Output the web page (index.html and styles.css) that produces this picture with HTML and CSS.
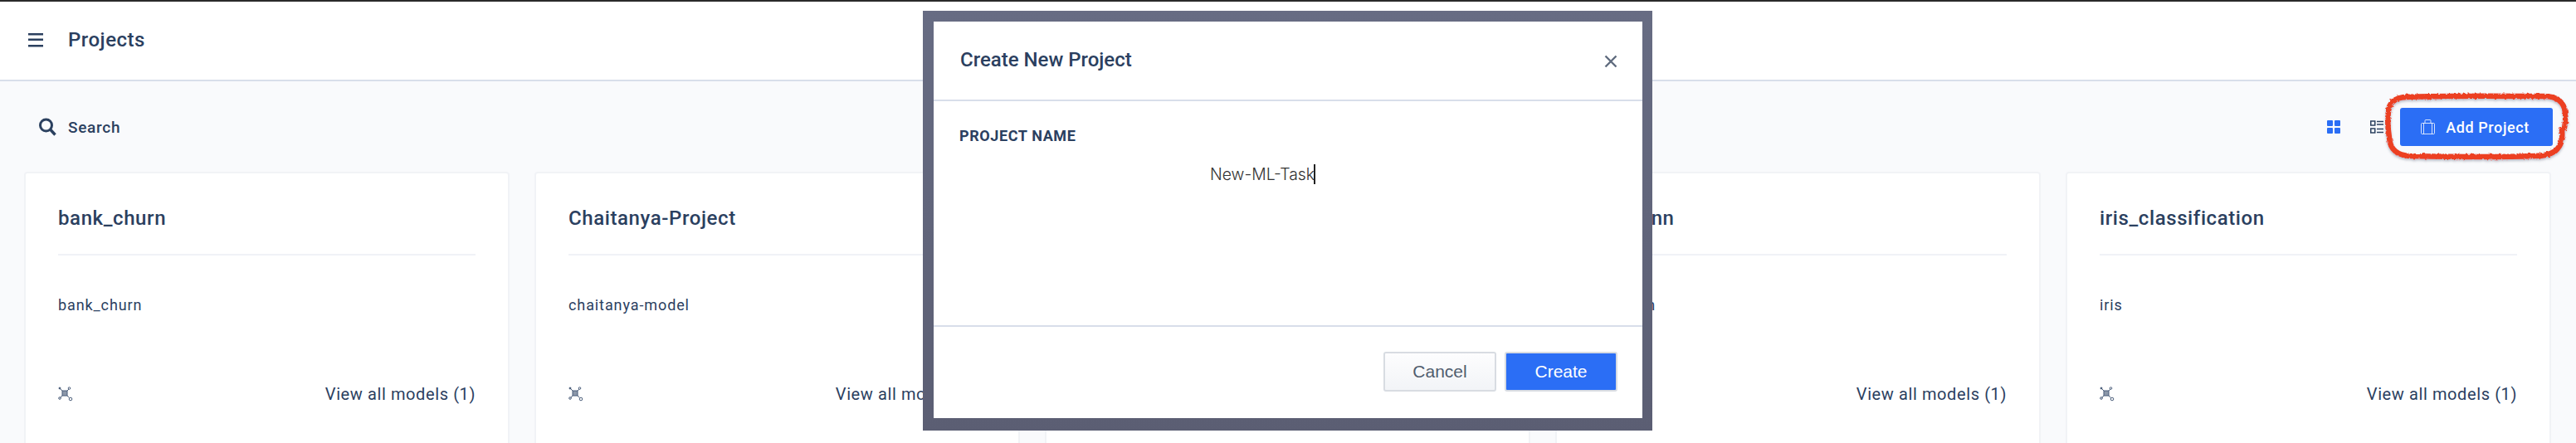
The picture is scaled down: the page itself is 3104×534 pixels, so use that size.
FILE: index.html
```html
<!DOCTYPE html>
<html>

<head>
    <meta charset="utf-8">
    <title>Projects</title>
    <link rel="stylesheet" href="styles.css">
</head>

<body>
    <div class="page-header">
        <svg class="menu-icon" width="18" height="18" viewBox="0 0 18 18">
            <path d="M0 1h18v2.400H0zM0 7.500h18v2.400H0zM0 15h18v2.400H0z" fill="#2b405f"/>
        </svg>
        <span class="page-title">Projects</span>
    </div>

    <div class="content">
        <div class="toolbar">
            <div class="search">
                <svg width="22" height="22" viewBox="0 0 22 22" fill="none" stroke="#2b405f">
                    <circle cx="9.500" cy="9" r="7" stroke-width="3"/>
                    <path d="M14.500 14l6 6.500" stroke-width="3.400"/>
                </svg>
                <span>Search</span>
            </div>
            <div class="actions">
                <svg class="view-grid" width="16" height="16" viewBox="0 0 16 16" fill="#2b6ef5">
                    <rect width="7" height="7" rx="1"/>
                    <rect x="9" width="7" height="7" rx="1"/>
                    <rect y="9" width="7" height="7" rx="1"/>
                    <rect x="9" y="9" width="7" height="7" rx="1"/>
                </svg>
                <svg class="view-list" width="16" height="16" viewBox="0 0 16 16" fill="none" stroke="#2b405f" stroke-width="1.500">
                    <rect x=".75" y="1" width="5" height="5"/>
                    <rect x=".75" y="10" width="5" height="5"/>
                    <path d="M8 1.500h8M8 5h8M8 10.500h8M8 14.500h8"/>
                </svg>
                <button class="add-btn">
                    <svg width="17" height="18" viewBox="0 0 17 18" fill="none" stroke="#fff" stroke-opacity=".8" stroke-width="1">
                        <rect x=".5" y="4.500" width="16" height="13" rx="1"/>
                        <path d="M5 4.500V1.500a1 1 0 0 1 1-1h5a1 1 0 0 1 1 1v3M3.500 4.500v13M13.500 4.500v13"/>
                    </svg>
                    Add Project
                </button>
            </div>
        </div>

        <div class="card-list">
            <div class="card">
                <div class="card-title">bank_churn</div>
                <div class="card-desc">bank_churn</div>
                <div class="card-foot">
                    <svg class="model-icon" width="18" height="18" viewBox="0 0 18 18" fill="none" stroke="#4a5d7a" stroke-width="1">
                        <rect x="5" y="5" width="6" height="6" fill="#8b97a9"/>
                        <path d="M5 5L2.500 2.500M11 5l2-2M5 11l-2 2M11 11l2.500 2.500"/>
                        <circle cx="2" cy="2" r="1" fill="#2b405f"/>
                        <circle cx="13.500" cy="2" r="1.300"/>
                        <circle cx="2" cy="14" r="1.300"/>
                        <circle cx="15" cy="15" r="1.800"/>
                    </svg>
                    <span>View all models (1)</span>
                </div>
            </div>
            <div class="card">
                <div class="card-title">Chaitanya-Project</div>
                <div class="card-desc">chaitanya-model</div>
                <div class="card-foot">
                    <svg class="model-icon" width="18" height="18" viewBox="0 0 18 18" fill="none" stroke="#4a5d7a" stroke-width="1">
                        <rect x="5" y="5" width="6" height="6" fill="#8b97a9"/>
                        <path d="M5 5L2.500 2.500M11 5l2-2M5 11l-2 2M11 11l2.500 2.500"/>
                        <circle cx="2" cy="2" r="1" fill="#2b405f"/>
                        <circle cx="13.500" cy="2" r="1.300"/>
                        <circle cx="2" cy="14" r="1.300"/>
                        <circle cx="15" cy="15" r="1.800"/>
                    </svg>
                    <span>View all models (1)</span>
                </div>
            </div>
            <div class="card">
                <div class="card-title">credit_risk</div>
                <div class="card-desc">credit</div>
                <div class="card-foot">
                    <svg class="model-icon" width="18" height="18" viewBox="0 0 18 18"></svg>
                    <span>View all models (1)</span>
                </div>
            </div>
            <div class="card">
                <div class="card-title">demo_nn</div>
                <div class="card-desc">demo_nn</div>
                <div class="card-foot">
                    <svg class="model-icon" width="18" height="18" viewBox="0 0 18 18"></svg>
                    <span>View all models (1)</span>
                </div>
            </div>
            <div class="card">
                <div class="card-title">iris_classification</div>
                <div class="card-desc">iris</div>
                <div class="card-foot">
                    <svg class="model-icon" width="18" height="18" viewBox="0 0 18 18" fill="none" stroke="#4a5d7a" stroke-width="1">
                        <rect x="5" y="5" width="6" height="6" fill="#8b97a9"/>
                        <path d="M5 5L2.500 2.500M11 5l2-2M5 11l-2 2M11 11l2.500 2.500"/>
                        <circle cx="2" cy="2" r="1" fill="#2b405f"/>
                        <circle cx="13.500" cy="2" r="1.300"/>
                        <circle cx="2" cy="14" r="1.300"/>
                        <circle cx="15" cy="15" r="1.800"/>
                    </svg>
                    <span>View all models (1)</span>
                </div>
            </div>
        </div>
    </div>

    <!-- red marker drawn over the button -->
    <svg class="marker" width="236" height="96" viewBox="0 0 236 96" fill="none">
        <defs>
            <filter id="rough" x="-5%" y="-10%" width="110%" height="125%">
                <feTurbulence type="fractalNoise" baseFrequency=".35" numOctaves="2" seed="4"/>
                <feDisplacementMap in="SourceGraphic" scale="3.500"/>
                <feDropShadow dx="0" dy="2" stdDeviation="1.500" flood-color="#6b7285" flood-opacity=".45"/>
            </filter>
        </defs>
        <g filter="url(#rough)" stroke="#ec4024" stroke-width="6.500" stroke-linecap="round">
            <path d="M30 13C80 11 170 12 198 12c16 0 24 8 25 20 1 8 0 12 -1 18"/>
            <path d="M219 53c1 10 0 18 -8 25-6 4 -14 6 -24 6C140 86 80 85 36 84 20 83 12 76 11 62 9 50 9 38 10 30 11 19 18 14 30 13"/>
        </g>
    </svg>

    <div class="modal-frame">
        <div class="modal">
            <div class="modal-head">
                <span class="modal-title">Create New Project</span>
                <svg class="modal-close" width="16" height="16" viewBox="0 0 16 16" stroke="#5f6b7e" stroke-width="2.400">
                    <path d="M1.500 1.500l13 13M14.500 1.500l-13 13"/>
                </svg>
            </div>
            <div class="modal-body">
                <div class="field-label">PROJECT NAME</div>
                <div class="field-value"><span>New-ML-Task</span><i class="caret"></i></div>
            </div>
            <div class="modal-foot">
                <button class="btn btn-cancel">Cancel</button>
                <button class="btn btn-create">Create</button>
            </div>
        </div>
    </div>
</body>

</html>
```

FILE: styles.css
```css
* {
    box-sizing: border-box;
}

html,
body {
    margin: 0;
    height: 534px;
    overflow: hidden;
}

body {
    position: relative;
    background: #f9fafc;
    border-top: 2px solid #2a2a2a;
    font-family: Roboto, "Liberation Sans", sans-serif;
    color: #2b405f;
}

.page-header {
    height: 96px;
    padding: 0 0 2px 34px;
    display: flex;
    align-items: center;
    background: #fff;
    border-bottom: 2px solid #d8deea;
}

.menu-icon {
    margin-right: 30px;
}

.page-title {
    font-size: 24px;
    font-weight: 500;
    letter-spacing: .5px;
}

.toolbar {
    height: 109px;
    padding: 32px 28px 0 46px;
    display: flex;
    justify-content: space-between;
    align-items: flex-start;
}

.search {
    display: flex;
    align-items: center;
    height: 46px;
    font-size: 19px;
    font-weight: 500;
    letter-spacing: .7px;
}

.search svg {
    margin-right: 14px;
}

.actions {
    display: flex;
    align-items: center;
}

.view-grid {
    margin-right: 36px;
}

.view-list {
    margin-right: 20px;
}

.add-btn {
    width: 184px;
    height: 46px;
    padding: 0 3px 0 0;
    display: flex;
    align-items: center;
    justify-content: center;
    gap: 13px;
    border: 0;
    border-radius: 3px;
    background: #2b6ef5;
    color: #fff;
    font-family: inherit;
    font-size: 18px;
    font-weight: 500;
    letter-spacing: .6px;
}

.card-list {
    padding: 0 30px 0 29px;
    display: grid;
    grid-template-columns: repeat(5, 585px);
    column-gap: 30px;
}

.card {
    height: 340px;
    padding: 0 39px;
    background: #fff;
    border: 2px solid #f1f3f6;
    border-radius: 4px;
}

.card-title {
    height: 99px;
    padding-top: 38px;
    font-size: 24px;
    line-height: 32px;
    font-weight: 500;
    letter-spacing: .6px;
    border-bottom: 2px solid #f0f2f7;
}

.card-desc {
    margin-top: 46px;
    height: 28px;
    font-size: 18px;
    line-height: 28px;
    letter-spacing: .9px;
}

.card-foot {
    margin-top: 79px;
    display: flex;
    justify-content: space-between;
    align-items: center;
    font-size: 20px;
    line-height: 28px;
    letter-spacing: .6px;
}

.modal-frame {
    position: absolute;
    left: 1112px;
    top: 11px;
    width: 879px;
    height: 506px;
    padding: 13px 12px 15px 13px;
    background: linear-gradient(#676c83, #5b5e73);
}

.modal {
    height: 100%;
    display: flex;
    flex-direction: column;
    background: #fff;
}

.modal-head {
    height: 96px;
    flex: none;
    padding: 0 30px 2px 32px;
    display: flex;
    justify-content: space-between;
    align-items: center;
    border-bottom: 2px solid #d8deea;
}

.modal-title {
    font-size: 24px;
    font-weight: 500;
}

.modal-close {
    margin-top: 4px;
}

.modal-body {
    flex: 1;
    padding: 31px 31px 0;
}

.field-label {
    font-size: 18px;
    line-height: 22px;
    font-weight: 700;
    letter-spacing: .6px;
}

.field-value {
    margin: 22px 0 0 302px;
    display: flex;
    align-items: center;
    height: 26px;
    font-family: Inter, "Liberation Sans", sans-serif;
    font-size: 19.400px;
    font-weight: 300;
    color: #333;
}

.caret {
    width: 2px;
    height: 24px;
    margin-left: -1px;
    background: #222;
}

.modal-foot {
    height: 112px;
    flex: none;
    padding: 30px 30px 0 0;
    display: flex;
    justify-content: flex-end;
    gap: 10px;
    border-top: 2px solid #d8deea;
}

.btn {
    width: 136px;
    height: 48px;
    padding: 0;
    border: 2px solid #d8dce2;
    border-radius: 3px;
    font-family: "Liberation Sans", sans-serif;
    font-size: 21px;
}

.btn-cancel {
    background: linear-gradient(#fdfdfe, #f2f4f7);
    color: #515d6e;
}

.btn-create {
    background: #2b6ef5;
    color: #fff;
}

.marker {
    position: absolute;
    left: 2868px;
    top: 102px;
}
```
